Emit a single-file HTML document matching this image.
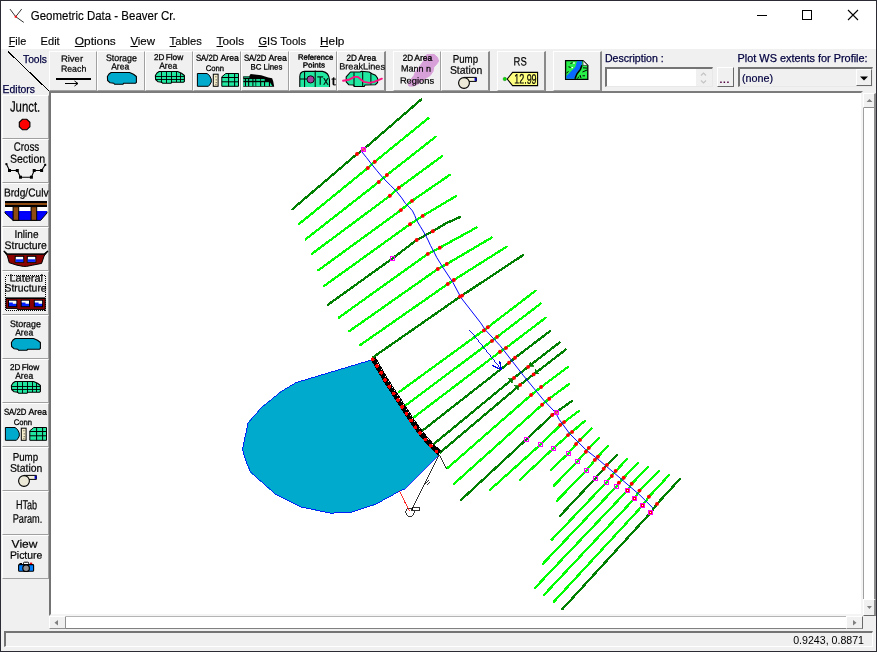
<!DOCTYPE html>
<html><head><meta charset="utf-8"><title>Geometric Data - Beaver Cr.</title>
<style>
html,body{margin:0;padding:0}
body{width:877px;height:652px;overflow:hidden;background:#f0f0f0;font-family:"Liberation Sans", sans-serif;position:relative}
svg text{font-family:"Liberation Sans", sans-serif}
.abs,.btn,.sb{position:absolute;box-sizing:border-box}
.btn{background:#f0f0f0;border-top:1px solid #fff;border-left:1px solid #fff;border-right:1px solid #a0a0a0;border-bottom:1px solid #a0a0a0}
.btn.end{border-right:2px solid #8a8a8a}
.btn svg{position:absolute;left:-1px;top:-1px;overflow:hidden;will-change:transform;text-rendering:geometricPrecision}
#frame{left:0;top:0;width:877px;height:652px;border:1px solid #2b2b33;pointer-events:none}
#title{left:1px;top:1px;width:875px;height:48px;background:#fff}
#canvas{left:49px;top:91px;width:814px;height:525px;background:#fff;border-top:2px solid #7c7c7c;border-left:2px solid #747474;border-right:2px solid #f4f4f4;border-bottom:2px solid #f4f4f4}
#vs{left:863px;top:93px;width:13px;height:523px;background:#fff;border-left:1px solid #a0a0a0;border-right:2px solid #8c8c8c}
#hs{left:49px;top:616px;width:814px;height:13px;background:#fff;border-top:1px solid #b4b4b4;border-bottom:1px solid #808080}
.sb{background:#f0f0f0;border-top:1px solid #fff;border-left:1px solid #fff;border-right:1px solid #909090;border-bottom:1px solid #909090}
#status{left:4px;top:631px;width:869px;height:16px;border-top:2px solid #747474;border-left:2px solid #747474;border-right:1px solid #fff;border-bottom:1px solid #fff;background:#f0f0f0}
#desc{left:605px;top:67px;width:108px;height:20px;background:#fff;border-top:2px solid #747474;border-left:2px solid #747474;border-right:1px solid #e8e8e8;border-bottom:1px solid #e8e8e8}
#combo{left:738px;top:67px;width:135px;height:20px;background:#f0f0f0;border-top:2px solid #747474;border-left:2px solid #747474;border-right:1px solid #e8e8e8;border-bottom:1px solid #e8e8e8}
#ov{position:absolute;left:0;top:0;pointer-events:none}
</style></head><body>
<div class="abs" id="title"></div>
<div class="abs" id="canvas"></div>
<div class="abs" id="vs"></div>
<div class="abs" id="hs"></div>
<div class="sb" style="left:863px;top:93px;width:13px;height:15px;border-right:2px solid #8c8c8c"></div>
<div class="sb" style="left:863px;top:599px;width:13px;height:17px;border-right:2px solid #8c8c8c;border-bottom:1px solid #696969"></div>
<div class="sb" style="left:49px;top:616px;width:17px;height:13px"></div>
<div class="sb" style="left:846px;top:616px;width:17px;height:13px;border-right:1px solid #696969"></div>
<div class="abs" id="status"></div>
<div class="abs" id="desc"></div>
<div class="abs" id="combo"></div>
<div class="sb" style="left:717px;top:67px;width:17px;height:20px;border-right:1px solid #696969;border-bottom:1px solid #696969"></div>
<div class="sb" style="left:856px;top:69px;width:16px;height:17px;border-right:1px solid #696969;border-bottom:1px solid #696969"></div>
<div class="btn" style="left:49px;top:51px;width:48px;height:40px"><svg width="48" height="40" viewBox="49 51 48 40"><text x="60.9" y="61.8" font-size="9.06" fill="#000" textLength="22.2" lengthAdjust="spacingAndGlyphs" stroke="#000" stroke-width="0.22" transform="rotate(0.2 60.9 61.8)">River</text><text x="60.9" y="71.8" font-size="9.06" fill="#000" textLength="25.4" lengthAdjust="spacingAndGlyphs" stroke="#000" stroke-width="0.22" transform="rotate(0.2 60.9 71.8)">Reach</text><path d="M56 79 H91" stroke="#000" stroke-width="2" shape-rendering="crispEdges"/><path d="M65 83.5 H78 M74.5 81 L78 83.5 L74.5 86" stroke="#000" stroke-width="1" fill="none"/></svg></div>
<div class="btn" style="left:97px;top:51px;width:48px;height:40px"><svg width="48" height="40" viewBox="97 51 48 40"><g transform="translate(96 -266)"><text x="9.9" y="327.1" font-size="9.48" fill="#000" textLength="31.0" lengthAdjust="spacingAndGlyphs" stroke="#000" stroke-width="0.25" transform="rotate(0.2 9.9 327.1)">Storage</text><text x="15.2" y="335.5" font-size="9.06" fill="#000" textLength="18.0" lengthAdjust="spacingAndGlyphs" stroke="#000" stroke-width="0.25" transform="rotate(0.2 15.2 335.5)">Area</text><path d="M15.2 338.5 H33.6 L37.5 340.2 L40.4 342.5 V348.4 L39.6 349.2 H27.6 L27 350.3 H18.6 L17.8 349.2 L14.2 348.8 L11.6 346.5 L11.4 342.5 L13 340 Z" fill="#00aacc" stroke="#000" stroke-width="1.1" stroke-linejoin="round"/></g></svg></div>
<div class="btn" style="left:145px;top:51px;width:48px;height:40px"><svg width="48" height="40" viewBox="145 51 48 40"><g transform="translate(144 -310)"><text x="9.9" y="370.0" font-size="8.45" fill="#000" textLength="10.4" lengthAdjust="spacingAndGlyphs" stroke="#000" stroke-width="0.3" transform="rotate(0.2 9.9 370.0)">2D</text><text x="21.7" y="370.0" font-size="8.45" fill="#000" textLength="17.5" lengthAdjust="spacingAndGlyphs" stroke="#000" stroke-width="0.3" transform="rotate(0.2 21.7 370.0)">Flow</text><text x="15.2" y="378.8" font-size="9.06" fill="#000" textLength="18.0" lengthAdjust="spacingAndGlyphs" stroke="#000" stroke-width="0.25" transform="rotate(0.2 15.2 378.8)">Area</text><g transform="translate(0 43)"><path d="M15.2 338.5 H33.6 L37.5 340.2 L40.4 342.5 V348.4 L39.6 349.2 H27.6 L27 350.3 H18.6 L17.8 349.2 L14.2 348.8 L11.6 346.5 L11.4 342.5 L13 340 Z" fill="#20e8a0" stroke="#000" stroke-width="1.1" stroke-linejoin="round"/><path d="M11.5 343 H40.4 M11.5 346.4 H40.4 M17.3 339 V349.5 M22.6 338.5 V350 M27.5 338.5 V350 M32.3 338.5 V349 M36.7 340 V349" stroke="#000" stroke-width="0.9" fill="none" shape-rendering="crispEdges"/></g></g></svg></div>
<div class="btn" style="left:193px;top:51px;width:48px;height:40px"><svg width="48" height="40" viewBox="193 51 48 40"><g transform="translate(192 -354)"><text x="3.9" y="414.7" font-size="8.65" fill="#000" textLength="22.5" lengthAdjust="spacingAndGlyphs" stroke="#000" stroke-width="0.3" transform="rotate(0.2 3.9 414.7)">SA/2D</text><text x="28.6" y="414.7" font-size="8.65" fill="#000" textLength="18.3" lengthAdjust="spacingAndGlyphs" stroke="#000" stroke-width="0.3" transform="rotate(0.2 28.6 414.7)">Area</text><text x="13.8" y="424.9" font-size="8.14" fill="#000" textLength="18.3" lengthAdjust="spacingAndGlyphs" stroke="#000" stroke-width="0.3" transform="rotate(0.2 13.8 424.9)">Conn</text><path d="M5.4 427.5 H15 L17.5 429.5 L19.2 433 L19.3 436 L17.6 439 L16.4 440.3 H5.4 Z" fill="#00aacc" stroke="#000" stroke-width="1"/><rect x="21.3" y="428.2" width="4.8" height="12.1" fill="#f6eecb" stroke="#000" stroke-width="1"/><path d="M23.9 430.3 v1 M24.2 433.4 v1 M24.2 436.2 v1 M23.9 438.3 v0.8" stroke="#333" stroke-width="1"/><path d="M33.8 427.5 H46.5 V440.3 H29.8 V430.8 Z" fill="#20e8a0" stroke="#000" stroke-width="1"/><path d="M29.8 431.5 H46.5 M29.8 435.8 H46.5 M36.6 427.5 V440.3 M42.6 427.5 V440.3" stroke="#000" stroke-width="1" fill="none"/></g></svg></div>
<div class="btn" style="left:241px;top:51px;width:48px;height:40px"><svg width="48" height="40" viewBox="241 51 48 40"><text x="243.9" y="60.7" font-size="8.65" fill="#000" textLength="22.5" lengthAdjust="spacingAndGlyphs" stroke="#000" stroke-width="0.3" transform="rotate(0.2 243.9 60.7)">SA/2D</text><text x="268.6" y="60.7" font-size="8.65" fill="#000" textLength="18.3" lengthAdjust="spacingAndGlyphs" stroke="#000" stroke-width="0.3" transform="rotate(0.2 268.6 60.7)">Area</text><text x="250.6" y="69.5" font-size="7.83" fill="#000" textLength="31.7" lengthAdjust="spacingAndGlyphs" stroke="#000" stroke-width="0.3" transform="rotate(0.2 250.6 69.5)">BC Lines</text><path d="M243.2 76.2 H249.2 L250.6 74.1 L261.2 75.2 L268.2 77.6 L272.1 78.3 L273.2 81.2 L274.2 86.8 H243.2Z" fill="#000"/><g fill="#20e8a0"><rect x="243.9" y="76.7" width="5.5" height="0.9"/><rect x="243.2" y="79.1" width="1.7" height="1.7"/><rect x="246" y="79.1" width="2.1" height="1.7"/><rect x="249.2" y="79.1" width="3.2" height="1.7"/><rect x="253.4" y="79.1" width="1.8" height="1.7"/><rect x="256.2" y="79.1" width="3.9" height="1.7"/><rect x="260.8" y="79.1" width="3.9" height="1.7"/><rect x="243.2" y="82.2" width="1.7" height="3.9"/><rect x="246" y="82.2" width="2.1" height="3.9"/><rect x="249.2" y="82.2" width="3.2" height="3.9"/><rect x="253.4" y="82.2" width="2.1" height="3.9"/><rect x="256.2" y="82.2" width="3.9" height="3.9"/><rect x="261.2" y="82.2" width="2.8" height="3.9"/><rect x="265.1" y="82.2" width="3.8" height="3.9"/><path d="M270 82.5 L272.3 86.1 H270Z"/></g></svg></div>
<div class="btn" style="left:289px;top:51px;width:48px;height:40px"><svg width="48" height="40" viewBox="289 51 48 40"><text x="297.9" y="59.6" font-size="7.42" fill="#000" textLength="35.3" lengthAdjust="spacingAndGlyphs" stroke="#000" stroke-width="0.35" transform="rotate(0.2 297.9 59.6)">Reference</text><text x="302.8" y="67.4" font-size="7.42" fill="#000" textLength="22.2" lengthAdjust="spacingAndGlyphs" stroke="#000" stroke-width="0.35" transform="rotate(0.2 302.8 67.4)">Points</text><path d="M299.8 87 V76.5 Q300 71.5 304.5 71.4 H322.5 Q329 72.5 329.5 80 V87" fill="#20e8a0" stroke="#000" stroke-width="1.1"/><path d="M304.6 71.5 V87 M315.2 70.5 V87 M300 79 H307" stroke="#000" stroke-width="1" fill="none"/><circle cx="310.6" cy="79.4" r="3.6" fill="#a040a0" stroke="#000" stroke-width="0.9"/><text x="317.3" y="84.7" font-size="12.15" fill="#000" textLength="6.0" lengthAdjust="spacingAndGlyphs" stroke="#000" stroke-width="0.22" transform="rotate(0.2 317.3 84.7)">T</text><text x="323.3" y="84.7" font-size="12.15" fill="#000" textLength="5.3" lengthAdjust="spacingAndGlyphs" stroke="#000" stroke-width="0.22" transform="rotate(0.2 323.3 84.7)">x</text><text x="331.4" y="85.2" font-size="12.15" fill="#000" textLength="4.4" lengthAdjust="spacingAndGlyphs" stroke="#000" stroke-width="0.22" transform="rotate(0.2 331.4 85.2)">t</text></svg></div>
<div class="btn end" style="left:337px;top:51px;width:49px;height:40px"><svg width="49" height="40" viewBox="337 51 49 40"><text x="346.6" y="60.7" font-size="8.65" fill="#000" textLength="10.4" lengthAdjust="spacingAndGlyphs" stroke="#000" stroke-width="0.3" transform="rotate(0.2 346.6 60.7)">2D</text><text x="358.2" y="60.7" font-size="8.65" fill="#000" textLength="18.0" lengthAdjust="spacingAndGlyphs" stroke="#000" stroke-width="0.3" transform="rotate(0.2 358.2 60.7)">Area</text><text x="339.2" y="69.5" font-size="9.06" fill="#000" textLength="45.8" lengthAdjust="spacingAndGlyphs" stroke="#000" stroke-width="0.22" transform="rotate(0.2 339.2 69.5)">BreakLines</text><path d="M350.5 72 H360 L361.4 71.3 L369.2 72 L372 73.8 L375.5 75.2 L377.6 78.3 V82.6 L375.5 84.7 L365 85 L364.2 86.5 H354.3 L353.6 85 L348.7 84.7 L346.2 81.9 V76.9 Z" fill="#20e8a0" stroke="#000" stroke-width="1.1" stroke-linejoin="round"/><path d="M354 72.5 V86.5 M362.7 71.3 V86.5 M370.9 73.4 V84.7" stroke="#000" stroke-width="1" fill="none"/><path d="M343.1 80.8 L348.7 79.8 L354.3 76.9 L357.9 76.9 L360.7 79.4 L364.2 81.9 L369.2 82.9 L374.1 81.9 L378.3 80.1 L381.9 78.7" stroke="#ff1080" stroke-width="1.9" fill="none" stroke-linecap="round" stroke-linejoin="round"/></svg></div>
<div class="btn" style="left:393px;top:51px;width:48px;height:40px"><svg width="48" height="40" viewBox="393 51 48 40"><polygon points="426.7,54.7 434.1,54.4 437.3,57.2 438.7,61.1 436.6,64.2 433.8,67.1 433.0,71.3 430.2,75.5 423.2,79.8 418.2,84.0 413.3,86.1 409.1,86.1 408.0,84.0 411.2,79.1 414.0,75.5 415.4,72.0 420.3,65.6 423.2,61.4 424.6,57.2" fill="#d8a0d8" stroke="#d8a0d8" stroke-width="1" stroke-linejoin="round"/><text x="402.7" y="60.7" font-size="8.65" fill="#000" textLength="10.4" lengthAdjust="spacingAndGlyphs" stroke="#000" stroke-width="0.3" transform="rotate(0.2 402.7 60.7)">2D</text><text x="414.3" y="60.7" font-size="8.65" fill="#000" textLength="18.0" lengthAdjust="spacingAndGlyphs" stroke="#000" stroke-width="0.3" transform="rotate(0.2 414.3 60.7)">Area</text><text x="400.9" y="71.6" font-size="9.06" fill="#000" textLength="30.0" lengthAdjust="spacingAndGlyphs" stroke="#000" stroke-width="0.22" transform="rotate(0.2 400.9 71.6)">Mann n</text><text x="399.9" y="83.6" font-size="8.86" fill="#000" textLength="34.2" lengthAdjust="spacingAndGlyphs" stroke="#000" stroke-width="0.22" transform="rotate(0.2 399.9 83.6)">Regions</text></svg></div>
<div class="btn end" style="left:441px;top:51px;width:49px;height:40px"><svg width="49" height="40" viewBox="441 51 49 40"><g transform="translate(440 -398)"><text x="12.7" y="460.8" font-size="11.12" fill="#000" textLength="25.4" lengthAdjust="spacingAndGlyphs" stroke="#000" stroke-width="0.22" transform="rotate(0.2 12.7 460.8)">Pump</text><text x="9.9" y="471.8" font-size="11.12" fill="#000" textLength="32.4" lengthAdjust="spacingAndGlyphs" stroke="#000" stroke-width="0.22" transform="rotate(0.2 9.9 471.8)">Station</text><path d="M24 475.4 H36.4 V479.4 H29" fill="#f4f0dc" stroke="#000" stroke-width="1"/><rect x="34.6" y="475.9" width="1.8" height="3" fill="#0000d0"/><circle cx="24" cy="481" r="5.4" fill="#ece9d8" stroke="#000" stroke-width="1.1"/></g></svg></div>
<div class="btn end" style="left:497px;top:51px;width:49px;height:40px"><svg width="49" height="40" viewBox="497 51 49 40"><text x="513.6" y="65.6" font-size="12.15" fill="#000" textLength="13.1" lengthAdjust="spacingAndGlyphs" stroke="#000" stroke-width="0.22" transform="rotate(0.2 513.6 65.6)">RS</text><path d="M507.2 79 L512.6 72.4 H537.6 V85.6 H512.6Z" fill="#ffff80" stroke="#000" stroke-width="1.1"/><circle cx="504.8" cy="79" r="1.7" fill="#00e000" stroke="#108010" stroke-width="0.5"/><text x="514.2" y="83.6" font-size="13.7" fill="#000" textLength="22.4" lengthAdjust="spacingAndGlyphs" stroke="#000" stroke-width="0.22" transform="rotate(0.2 514.2 83.6)">12.99</text></svg></div>
<div class="btn end" style="left:553px;top:51px;width:49px;height:40px"><svg width="49" height="40" viewBox="553 51 49 40"><path d="M565.6 60.6 H583 L587.8 65.4 V79.3 H565.6Z" fill="#28f048" stroke="#000" stroke-width="1.3"/><path d="M583 60.6 V65.4 H587.8Z" fill="#fff" stroke="#000" stroke-width="0.6"/><path d="M566.3 78.7 V76 L571.8 70.6 L575.3 67 L577 61.3 H582 L581.8 64.9 L580 69 L576.5 73.2 L574.4 78.7Z" fill="#0868ff"/><path d="M575 78.7 L577 73.8 L580.4 69.4 L582 65.3" stroke="#000" stroke-width="1.6" fill="none"/><path d="M570.5 63.5 l2 -0.8 M568.5 66.8 l2.2 0.6 M566.5 73 l2 -1.5 M580 75 l1 3 M582.5 75.8 h2.5 M583 67.8 l4 0.3 M582.5 72 l4.5 -2 M579 76.5 l-1.5 2" stroke="#000" stroke-width="1" fill="none"/><rect x="573.2" y="62.3" width="1.5" height="1.5" fill="#fff"/><rect x="571.5" y="67" width="1.5" height="1.2" fill="#fff"/></svg></div>
<div class="btn" style="left:2px;top:95px;width:47px;height:44px"><svg width="47" height="44" viewBox="2 95 47 44"><text x="9.9" y="111.6" font-size="14.94" fill="#000" textLength="30.3" lengthAdjust="spacingAndGlyphs" stroke="#000" stroke-width="0.22" transform="rotate(0.2 9.9 111.6)">Junct.</text><path d="M22.4 119.3 H26.8 L29.9 122.3 V126.7 L26.8 129.8 H22.4 L19.3 126.7 V122.3Z" fill="#ff0000" stroke="#000" stroke-width="1.1"/></svg></div>
<div class="btn" style="left:2px;top:139px;width:47px;height:44px"><svg width="47" height="44" viewBox="2 139 47 44"><text x="13.8" y="150.7" font-size="12.15" fill="#000" textLength="25.4" lengthAdjust="spacingAndGlyphs" stroke="#000" stroke-width="0.22" transform="rotate(0.2 13.8 150.7)">Cross</text><text x="9.9" y="162.7" font-size="11.74" fill="#000" textLength="35.3" lengthAdjust="spacingAndGlyphs" stroke="#000" stroke-width="0.22" transform="rotate(0.2 9.9 162.7)">Section</text><polyline points="6.4,164.1 9.5,170.5 17.3,170.5 20.5,177.2 31.4,177.2 34.2,170.5 41.6,170.5 45.2,164.8" fill="none" stroke="#000" stroke-width="1.1"/><rect x="5.4" y="163.1" width="2" height="2" fill="#000"/><rect x="8.0" y="169.0" width="3.0" height="3.0" fill="#000"/><rect x="15.8" y="169.0" width="3.0" height="3.0" fill="#000"/><rect x="19.0" y="175.7" width="3.0" height="3.0" fill="#000"/><rect x="29.9" y="175.7" width="3.0" height="3.0" fill="#000"/><rect x="32.7" y="169.0" width="3.0" height="3.0" fill="#000"/><rect x="40.1" y="169.0" width="3.0" height="3.0" fill="#000"/><rect x="44.2" y="163.8" width="2" height="2" fill="#000"/></svg></div>
<div class="btn" style="left:2px;top:183px;width:47px;height:44px"><svg width="47" height="44" viewBox="2 183 47 44"><text x="3.9" y="196.5" font-size="11.64" fill="#000" textLength="44.6" lengthAdjust="spacingAndGlyphs" stroke="#000" stroke-width="0.22" transform="rotate(0.2 3.9 196.5)">Brdg/Culv</text><g shape-rendering="crispEdges"><rect x="5" y="201" width="42" height="6" fill="#000"/><rect x="5" y="202.5" width="42" height="2.5" fill="#8e4c12"/><rect x="5" y="207" width="42" height="5" fill="#fff"/></g><path d="M5 211.6 H47 V213 L40.6 220.4 H13.1 L5 213Z" fill="#0000ff" stroke="#000" stroke-width="1" stroke-linejoin="round"/><path d="M5 211.6 H47" stroke="#0000ff" stroke-width="1.2"/><rect x="13.1" y="206.7" width="5.6" height="13.6" fill="#8e4c12" stroke="#000" stroke-width="1"/><rect x="31.1" y="206.7" width="5.6" height="13.6" fill="#8e4c12" stroke="#000" stroke-width="1"/></svg></div>
<div class="btn" style="left:2px;top:227px;width:47px;height:44px"><svg width="47" height="44" viewBox="2 227 47 44"><text x="14.5" y="238.0" font-size="11.12" fill="#000" textLength="24.0" lengthAdjust="spacingAndGlyphs" stroke="#000" stroke-width="0.22" transform="rotate(0.2 14.5 238.0)">Inline</text><text x="4.6" y="248.9" font-size="11.12" fill="#000" textLength="42.3" lengthAdjust="spacingAndGlyphs" stroke="#000" stroke-width="0.22" transform="rotate(0.2 4.6 248.9)">Structure</text><path d="M3.9 251 L7.4 254.2 H44.1 L48 251 L44.1 256 L41.6 263.4 L32.5 265.2 L26.5 266.4 H23.3 L16.9 265.2 L9.2 262.7 L7.4 256 Z" fill="#8b0000" stroke="#000" stroke-width="1" stroke-linejoin="round"/><path d="M3.9 251 L7.4 254.2 H44.1 L48 251" fill="none" stroke="#000" stroke-width="1.3"/><rect x="15.2" y="256.3" width="8.5" height="6" fill="#fff" stroke="#000" stroke-width="1"/><rect x="15.7" y="259.3" width="7.5" height="2.6" fill="#0020ff"/><rect x="27.3" y="256.3" width="8.5" height="6" fill="#fff" stroke="#000" stroke-width="1"/><rect x="27.8" y="259.3" width="7.5" height="2.6" fill="#0020ff"/></svg></div>
<div class="btn" style="left:2px;top:271px;width:47px;height:44px"><svg width="47" height="44" viewBox="2 271 47 44"><text x="9.5" y="281.6" font-size="10.51" fill="#000" textLength="33.5" lengthAdjust="spacingAndGlyphs" stroke="#000" stroke-width="0.22" transform="rotate(0.2 9.5 281.6)">Lateral</text><text x="4.6" y="291.5" font-size="10.71" fill="#000" textLength="42.0" lengthAdjust="spacingAndGlyphs" stroke="#000" stroke-width="0.22" transform="rotate(0.2 4.6 291.5)">Structure</text><path d="M6 298.3 H45.2 V309.4 H17.3 V308.4 H6Z" fill="#8b0000" stroke="#000" stroke-width="1"/><path d="M6 298.3 H45.2" stroke="#000" stroke-width="1.6"/><rect x="8.5" y="300.3" width="8.3" height="6.4" fill="#0020ff" stroke="#000" stroke-width="1"/><path d="M9.0 300.8 h7.3 v3 h-3.5 v-1.2 h-3.8Z" fill="#fffff0"/><rect x="21.2" y="300.3" width="8.3" height="6.4" fill="#0020ff" stroke="#000" stroke-width="1"/><path d="M21.7 300.8 h7.3 v3 h-3.5 v-1.2 h-3.8Z" fill="#fffff0"/><rect x="34.3" y="300.3" width="8.3" height="6.4" fill="#0020ff" stroke="#000" stroke-width="1"/><path d="M34.8 300.8 h7.3 v3 h-3.5 v-1.2 h-3.8Z" fill="#fffff0"/><rect x="5.5" y="275.5" width="40" height="35" fill="none" stroke="#000" stroke-width="1" stroke-dasharray="1 1" shape-rendering="crispEdges"/></svg></div>
<div class="btn" style="left:2px;top:315px;width:47px;height:44px"><svg width="47" height="44" viewBox="2 315 47 44"><text x="9.9" y="327.1" font-size="9.48" fill="#000" textLength="31.0" lengthAdjust="spacingAndGlyphs" stroke="#000" stroke-width="0.25" transform="rotate(0.2 9.9 327.1)">Storage</text><text x="15.2" y="335.5" font-size="9.06" fill="#000" textLength="18.0" lengthAdjust="spacingAndGlyphs" stroke="#000" stroke-width="0.25" transform="rotate(0.2 15.2 335.5)">Area</text><path d="M15.2 338.5 H33.6 L37.5 340.2 L40.4 342.5 V348.4 L39.6 349.2 H27.6 L27 350.3 H18.6 L17.8 349.2 L14.2 348.8 L11.6 346.5 L11.4 342.5 L13 340 Z" fill="#00aacc" stroke="#000" stroke-width="1.1" stroke-linejoin="round"/></svg></div>
<div class="btn" style="left:2px;top:359px;width:47px;height:44px"><svg width="47" height="44" viewBox="2 359 47 44"><text x="9.9" y="370.0" font-size="8.45" fill="#000" textLength="10.4" lengthAdjust="spacingAndGlyphs" stroke="#000" stroke-width="0.3" transform="rotate(0.2 9.9 370.0)">2D</text><text x="21.7" y="370.0" font-size="8.45" fill="#000" textLength="17.5" lengthAdjust="spacingAndGlyphs" stroke="#000" stroke-width="0.3" transform="rotate(0.2 21.7 370.0)">Flow</text><text x="15.2" y="378.8" font-size="9.06" fill="#000" textLength="18.0" lengthAdjust="spacingAndGlyphs" stroke="#000" stroke-width="0.25" transform="rotate(0.2 15.2 378.8)">Area</text><g transform="translate(0 43)"><path d="M15.2 338.5 H33.6 L37.5 340.2 L40.4 342.5 V348.4 L39.6 349.2 H27.6 L27 350.3 H18.6 L17.8 349.2 L14.2 348.8 L11.6 346.5 L11.4 342.5 L13 340 Z" fill="#20e8a0" stroke="#000" stroke-width="1.1" stroke-linejoin="round"/><path d="M11.5 343 H40.4 M11.5 346.4 H40.4 M17.3 339 V349.5 M22.6 338.5 V350 M27.5 338.5 V350 M32.3 338.5 V349 M36.7 340 V349" stroke="#000" stroke-width="0.9" fill="none" shape-rendering="crispEdges"/></g></svg></div>
<div class="btn" style="left:2px;top:403px;width:47px;height:44px"><svg width="47" height="44" viewBox="2 403 47 44"><text x="3.9" y="414.7" font-size="8.65" fill="#000" textLength="22.5" lengthAdjust="spacingAndGlyphs" stroke="#000" stroke-width="0.3" transform="rotate(0.2 3.9 414.7)">SA/2D</text><text x="28.6" y="414.7" font-size="8.65" fill="#000" textLength="18.3" lengthAdjust="spacingAndGlyphs" stroke="#000" stroke-width="0.3" transform="rotate(0.2 28.6 414.7)">Area</text><text x="13.8" y="424.9" font-size="8.14" fill="#000" textLength="18.3" lengthAdjust="spacingAndGlyphs" stroke="#000" stroke-width="0.3" transform="rotate(0.2 13.8 424.9)">Conn</text><path d="M5.4 427.5 H15 L17.5 429.5 L19.2 433 L19.3 436 L17.6 439 L16.4 440.3 H5.4 Z" fill="#00aacc" stroke="#000" stroke-width="1"/><rect x="21.3" y="428.2" width="4.8" height="12.1" fill="#f6eecb" stroke="#000" stroke-width="1"/><path d="M23.9 430.3 v1 M24.2 433.4 v1 M24.2 436.2 v1 M23.9 438.3 v0.8" stroke="#333" stroke-width="1"/><path d="M33.8 427.5 H46.5 V440.3 H29.8 V430.8 Z" fill="#20e8a0" stroke="#000" stroke-width="1"/><path d="M29.8 431.5 H46.5 M29.8 435.8 H46.5 M36.6 427.5 V440.3 M42.6 427.5 V440.3" stroke="#000" stroke-width="1" fill="none"/></svg></div>
<div class="btn" style="left:2px;top:447px;width:47px;height:44px"><svg width="47" height="44" viewBox="2 447 47 44"><text x="12.7" y="460.8" font-size="11.12" fill="#000" textLength="25.4" lengthAdjust="spacingAndGlyphs" stroke="#000" stroke-width="0.22" transform="rotate(0.2 12.7 460.8)">Pump</text><text x="9.9" y="471.8" font-size="11.12" fill="#000" textLength="32.4" lengthAdjust="spacingAndGlyphs" stroke="#000" stroke-width="0.22" transform="rotate(0.2 9.9 471.8)">Station</text><path d="M24 475.4 H36.4 V479.4 H29" fill="#f4f0dc" stroke="#000" stroke-width="1"/><rect x="34.6" y="475.9" width="1.8" height="3" fill="#0000d0"/><circle cx="24" cy="481" r="5.4" fill="#ece9d8" stroke="#000" stroke-width="1.1"/></svg></div>
<div class="btn" style="left:2px;top:491px;width:47px;height:44px"><svg width="47" height="44" viewBox="2 491 47 44"><text x="15.9" y="509.1" font-size="12.67" fill="#000" textLength="21.1" lengthAdjust="spacingAndGlyphs" stroke="#000" stroke-width="0.22" transform="rotate(0.2 15.9 509.1)">HTab</text><text x="12.7" y="522.8" font-size="12.26" fill="#000" textLength="29.6" lengthAdjust="spacingAndGlyphs" stroke="#000" stroke-width="0.22" transform="rotate(0.2 12.7 522.8)">Param.</text></svg></div>
<div class="btn" style="left:2px;top:535px;width:47px;height:44px"><svg width="47" height="44" viewBox="2 535 47 44"><text x="11.6" y="547.8" font-size="11.12" fill="#000" textLength="25.8" lengthAdjust="spacingAndGlyphs" stroke="#000" stroke-width="0.22" transform="rotate(0.2 11.6 547.8)">View</text><text x="9.9" y="558.7" font-size="10.71" fill="#000" textLength="32.4" lengthAdjust="spacingAndGlyphs" stroke="#000" stroke-width="0.22" transform="rotate(0.2 9.9 558.7)">Picture</text><rect x="23.5" y="562.2" width="5.2" height="3" rx="1" fill="#fff" stroke="#000" stroke-width="1"/><rect x="18.6" y="564.6" width="15" height="6.7" rx="0.8" fill="#0080ff" stroke="#000" stroke-width="1.1"/><rect x="19.5" y="563" width="2.5" height="1.5" fill="#000"/><rect x="30" y="562.6" width="2.2" height="1.5" fill="#f00000"/><circle cx="26.1" cy="568.2" r="3.3" fill="#909090" stroke="#000" stroke-width="1.2"/></svg></div>
<svg id="ov" width="877" height="652" viewBox="0 0 877 652">
<g shape-rendering="crispEdges">
<polygon points="371.2,360.0 347.9,367.1 325.3,373.8 296.0,382.6 281.4,391.4 261.9,407.2 248.1,422.8 242.5,449.1 245.6,460.4 250.6,472.2 275.7,494.3 300.2,506.8 330.4,513.1 350.4,512.6 375.3,504.4 403.5,489.0 437.8,455.3 431.0,446.0 420.0,433.0 411.0,420.4 398.0,400.2 385.0,380.0" fill="#00aacc" stroke="#00aacc" stroke-width="1"/>
<polygon points="371.2,360.0 347.9,367.1 325.3,373.8 296.0,382.6 281.4,391.4 261.9,407.2 248.1,422.8 242.5,449.1 245.6,460.4 250.6,472.2 275.7,494.3 300.2,506.8 330.4,513.1 350.4,512.6 375.3,504.4 403.5,489.0 437.8,455.3 431.0,446.0 420.0,433.0 411.0,420.4 398.0,400.2 385.0,380.0" fill="none" stroke="#0000ff" stroke-width="0.8"/>
<g stroke="#00ff00" stroke-width="2.3" fill="none" stroke-linecap="round" stroke-linejoin="round">
<polyline points="298.8,224.2 367.8,168.0 374.8,161.7 428.5,118.1"/>
<polyline points="305.6,239.3 378.8,182.0 386.9,175.0 435.5,136.9"/>
<polyline points="311.9,253.8 389.9,195.8 398.9,187.8 442.3,156.0"/>
<polyline points="318.4,270.2 400.9,210.1 412.0,200.9 449.6,175.0"/>
<polyline points="323.9,286.1 410.0,224.2 422.7,215.9 456.4,195.9"/>
<polyline points="338.7,317.7 427.8,253.9 439.8,247.7 476.4,227.6"/>
<polyline points="349.5,331.0 437.8,269.0 446.8,264.0 491.5,237.7"/>
<polyline points="360.3,345.0 447.8,284.0 453.9,280.0 506.6,246.7"/>
<polyline points="398.9,392.2 485.9,328.8 535.4,290.8"/>
<polyline points="406.4,404.8 494.5,338.9 540.7,303.6"/>
<polyline points="413.9,417.3 500.0,351.8 506.0,347.9 545.7,317.7"/>
<polyline points="447.2,468.3 531.1,395.0 541.1,387.0 567.7,367.1"/>
<polyline points="453.9,483.9 542.1,404.8 549.2,398.7 569.3,383.8"/>
<polyline points="489.9,490.0 540.5,444.5 562.2,423.5 579.2,410.8"/>
<polyline points="519.8,479.9 553.4,448.4 570.0,433.5 585.2,420.7"/>
<polyline points="550.9,469.8 568.5,453.3 578.0,441.9 591.5,428.7"/>
<polyline points="553.6,486.0 577.5,461.4 587.3,449.9 599.2,438.0"/>
<polyline points="556.7,501.0 586.5,470.3 596.3,458.4 608.2,445.7"/>
<polyline points="551.6,539.9 606.4,482.4 613.7,473.4 627.1,458.9"/>
<polyline points="542.8,563.9 616.4,486.5 621.3,480.3 638.0,462.9"/>
<polyline points="534.7,588.2 627.5,490.4 631.7,483.8 648.2,466.9"/>
<polyline points="544.1,594.8 634.6,498.4 639.5,490.6 659.1,470.9"/>
<polyline points="553.7,601.9 642.7,505.4 648.9,496.8 669.3,474.8"/>
</g>
<g stroke="#008000" stroke-width="2.3" fill="none" stroke-linecap="round" stroke-linejoin="round">
<polyline points="292.5,209.1 357.0,154.0 363.5,149.4 421.2,99.5"/>
<polyline points="327.7,304.9 392.4,258.5 416.7,240.0 432.8,231.2 446.0,223.3 460.1,217.0"/>
<polyline points="373.0,357.3 461.0,296.1 523.4,254.9"/>
<polyline points="422.7,430.4 509.0,362.8 515.0,357.8 550.2,331.0"/>
<polyline points="434.5,443.4 514.0,377.9 528.1,366.9 559.4,342.6"/>
<polyline points="440.3,452.4 520.1,384.9 533.6,374.4 565.6,349.7"/>
<polyline points="460.8,500.2 526.4,439.4 552.2,415.0 572.0,401.0"/>
<polyline points="559.7,516.2 595.3,478.4 605.3,466.9 617.0,454.8"/>
<polyline points="562.5,609.0 650.8,512.5 657.0,503.9 680.2,478.7"/>
</g>
<path d="M469.6 330 L501.2 369.4" fill="none" stroke="#0000e8" stroke-width="0.9"/><path d="M492.4 365.6 L501.2 369.4 L499.6 360.6" fill="none" stroke="#0000e8" stroke-width="1.3"/>
<polyline points="372.5,358.5 385.0,380.0 398.0,400.2 411.0,420.4 420.0,433.0 431.0,446.0 439.5,453.5" fill="none" stroke="#000" stroke-width="4.2"/>
<polyline points="374.9,357.0 387.4,378.5 400.4,398.7 413.4,418.9 422.4,431.5 433.4,444.5 441.9,452.0" fill="none" stroke="#000" stroke-width="1"/>
<circle cx="372.7" cy="359.3" r="1.9" fill="#ff0000"/>
<circle cx="376.9" cy="366" r="1.9" fill="#ff0000"/>
<circle cx="381.1" cy="372.8" r="1.9" fill="#ff0000"/>
<circle cx="385" cy="380.1" r="1.9" fill="#ff0000"/>
<circle cx="389.2" cy="386.8" r="1.9" fill="#ff0000"/>
<circle cx="393.8" cy="393.6" r="1.9" fill="#ff0000"/>
<circle cx="398" cy="400.2" r="1.9" fill="#ff0000"/>
<circle cx="402.2" cy="406.9" r="1.9" fill="#ff0000"/>
<circle cx="406.5" cy="413.9" r="1.9" fill="#ff0000"/>
<circle cx="411" cy="420.4" r="1.9" fill="#ff0000"/>
<circle cx="415.2" cy="427.2" r="1.9" fill="#ff0000"/>
<circle cx="420" cy="433.1" r="1.9" fill="#ff0000"/>
<circle cx="425.4" cy="439.5" r="1.9" fill="#ff0000"/>
<circle cx="430.9" cy="445.8" r="1.9" fill="#ff0000"/>
<circle cx="436.4" cy="451.4" r="1.9" fill="#ff0000"/>
<circle cx="410" cy="512.3" r="4.2" fill="#fff" stroke="#000" stroke-width="0.8"/>
<rect x="412.5" y="507.5" width="7" height="3" fill="#fff" stroke="#000" stroke-width="0.8"/>
<path d="M439.8 454.5 L446.8 468.5 M439 455.3 L411.4 510.5 M425.3 483.2 l3.4 -2.8 M426.8 485.2 l3.4 -2.8" fill="none" stroke="#000" stroke-width="0.8"/>
<path d="M399.9 491.4 L409.9 511.3 M403.5 502.5 l2 -1" fill="none" stroke="#ff0000" stroke-width="0.8"/>
<path d="M513.2 378.5 l-1.5 4.6 l-0.9 -2.7 l-2.6 -1.7 z" fill="#008000" stroke="#008000" stroke-width="0.8"/>
<path d="M519.3 385.5 l-1.5 4.6 l-0.9 -2.7 l-2.6 -1.7 z" fill="#008000" stroke="#008000" stroke-width="0.8"/>
<path d="M528.9 366.3 l1.5 -4.6 l0.9 2.7 l2.6 1.7 z" fill="#008000" stroke="#008000" stroke-width="0.8"/>
<path d="M534.4 373.8 l1.5 -4.6 l0.9 2.7 l2.6 1.7 z" fill="#008000" stroke="#008000" stroke-width="0.8"/>
</g>
<polyline points="361.5,151.4 366.6,157.7 370.8,163.2 376.6,170.3 382.9,177.8 390.4,185.3 396.7,191.6 401.7,197.9 405.4,203.4 409.2,207.1 412.5,210.9 414.7,215.4 416.7,220.4 420.5,226.7 425.0,234.2 428.0,240.0 430.5,245.5 433.5,251.0 436.8,257.6 443.1,267.7 453.1,282.8 461.1,297.8 480.7,322.9 485.4,330.0 500.0,345.5 523.1,375.2 543.5,400.0 555.7,412.8 559.1,419.3 569.5,433.5 585.9,449.8 599.2,460.2 614.1,472.9 640.0,495.2 652.9,508.0" fill="none" stroke="#0000ff" stroke-width="1"/>
<circle cx="357" cy="154" r="1.95" fill="#ff0000"/>
<circle cx="367.8" cy="168" r="1.95" fill="#ff0000"/>
<circle cx="374.8" cy="161.7" r="1.95" fill="#ff0000"/>
<circle cx="378.8" cy="182" r="1.95" fill="#ff0000"/>
<circle cx="386.9" cy="175" r="1.95" fill="#ff0000"/>
<circle cx="389.9" cy="195.8" r="1.95" fill="#ff0000"/>
<circle cx="398.9" cy="187.8" r="1.95" fill="#ff0000"/>
<circle cx="400.9" cy="210.1" r="1.95" fill="#ff0000"/>
<circle cx="412" cy="200.9" r="1.95" fill="#ff0000"/>
<circle cx="410" cy="224.2" r="1.95" fill="#ff0000"/>
<circle cx="422.7" cy="215.9" r="1.95" fill="#ff0000"/>
<circle cx="416.7" cy="240" r="1.95" fill="#ff0000"/>
<circle cx="432.8" cy="231.2" r="1.95" fill="#ff0000"/>
<circle cx="427.8" cy="253.9" r="1.95" fill="#ff0000"/>
<circle cx="439.8" cy="247.7" r="1.95" fill="#ff0000"/>
<circle cx="437.8" cy="269" r="1.95" fill="#ff0000"/>
<circle cx="446.8" cy="264" r="1.95" fill="#ff0000"/>
<circle cx="447.8" cy="284" r="1.95" fill="#ff0000"/>
<circle cx="453.9" cy="280" r="1.95" fill="#ff0000"/>
<circle cx="459.9" cy="296.6" r="1.95" fill="#ff0000"/>
<circle cx="462.1" cy="295.6" r="1.95" fill="#ff0000"/>
<circle cx="483.9" cy="330.4" r="1.95" fill="#ff0000"/>
<circle cx="487.8" cy="327.2" r="1.95" fill="#ff0000"/>
<circle cx="492" cy="340.9" r="1.95" fill="#ff0000"/>
<circle cx="497" cy="336.9" r="1.95" fill="#ff0000"/>
<circle cx="500" cy="351.8" r="1.95" fill="#ff0000"/>
<circle cx="506" cy="347.9" r="1.95" fill="#ff0000"/>
<circle cx="509" cy="362.8" r="1.95" fill="#ff0000"/>
<circle cx="515" cy="357.8" r="1.95" fill="#ff0000"/>
<circle cx="514" cy="377.9" r="1.95" fill="#ff0000"/>
<circle cx="528.1" cy="366.9" r="1.95" fill="#ff0000"/>
<circle cx="520.1" cy="384.9" r="1.95" fill="#ff0000"/>
<circle cx="533.6" cy="374.4" r="1.95" fill="#ff0000"/>
<circle cx="531.1" cy="395" r="1.95" fill="#ff0000"/>
<circle cx="541.1" cy="387" r="1.95" fill="#ff0000"/>
<circle cx="542.1" cy="404.8" r="1.95" fill="#ff0000"/>
<circle cx="549.2" cy="398.7" r="1.95" fill="#ff0000"/>
<circle cx="552.2" cy="415" r="1.95" fill="#ff0000"/>
<circle cx="560.2" cy="424.9" r="1.95" fill="#ff0000"/>
<circle cx="564.1" cy="422.1" r="1.95" fill="#ff0000"/>
<circle cx="568" cy="435.1" r="1.95" fill="#ff0000"/>
<circle cx="572.1" cy="431.9" r="1.95" fill="#ff0000"/>
<circle cx="576.1" cy="444" r="1.95" fill="#ff0000"/>
<circle cx="580" cy="439.9" r="1.95" fill="#ff0000"/>
<circle cx="585.9" cy="451.8" r="1.95" fill="#ff0000"/>
<circle cx="588.8" cy="447.9" r="1.95" fill="#ff0000"/>
<circle cx="594.8" cy="459.9" r="1.95" fill="#ff0000"/>
<circle cx="597.9" cy="456.8" r="1.95" fill="#ff0000"/>
<circle cx="603.7" cy="468.8" r="1.95" fill="#ff0000"/>
<circle cx="606.9" cy="464.9" r="1.95" fill="#ff0000"/>
<circle cx="611.8" cy="476" r="1.95" fill="#ff0000"/>
<circle cx="615.6" cy="470.9" r="1.95" fill="#ff0000"/>
<circle cx="618.9" cy="482.8" r="1.95" fill="#ff0000"/>
<circle cx="623.7" cy="477.8" r="1.95" fill="#ff0000"/>
<circle cx="627.5" cy="490.4" r="1.95" fill="#ff0000"/>
<circle cx="631.7" cy="483.8" r="1.95" fill="#ff0000"/>
<circle cx="634.6" cy="498.4" r="1.95" fill="#ff0000"/>
<circle cx="639.5" cy="490.6" r="1.95" fill="#ff0000"/>
<circle cx="642.7" cy="505.4" r="1.95" fill="#ff0000"/>
<circle cx="648.9" cy="496.8" r="1.95" fill="#ff0000"/>
<circle cx="650.8" cy="512.5" r="1.95" fill="#ff0000"/>
<circle cx="657" cy="503.9" r="1.95" fill="#ff0000"/>
<circle cx="363.5" cy="149.4" r="1.6" fill="#ff4060"/>
<circle cx="556.4" cy="412.5" r="1.6" fill="#ff4060"/>
<path d="M361 147h5v5h-5zM362 148h3v3h-3zM390 256h5v5h-5zM391 257h3v3h-3zM554 410h5v5h-5zM555 411h3v3h-3zM524 437h5v5h-5zM525 438h3v3h-3zM538 442h5v5h-5zM539 443h3v3h-3zM551 446h5v5h-5zM552 447h3v3h-3zM566 451h5v5h-5zM567 452h3v3h-3zM575 459h5v5h-5zM576 460h3v3h-3zM584 468h5v5h-5zM585 469h3v3h-3zM593 476h5v5h-5zM594 477h3v3h-3zM604 480h5v5h-5zM605 481h3v3h-3zM614 484h5v5h-5zM615 485h3v3h-3zM625 488h5v5h-5zM626 489h3v3h-3zM632 496h5v5h-5zM633 497h3v3h-3zM640 503h5v5h-5zM641 504h3v3h-3zM648 510h5v5h-5zM649 511h3v3h-3z" fill="#ff00ff" fill-rule="evenodd" shape-rendering="crispEdges"/>
<rect x="627" y="490" width="1" height="1" fill="#fff"/>
<rect x="634" y="498" width="1" height="1" fill="#fff"/>
<rect x="642" y="505" width="1" height="1" fill="#fff"/>
<rect x="650" y="512" width="1" height="1" fill="#fff"/>
<text x="30.8" y="20.0" font-size="12.0" fill="#000" textLength="144.8" lengthAdjust="spacingAndGlyphs" stroke="#000" stroke-width="0.15">Geometric Data - Beaver Cr.</text>
<text x="8.7" y="44.5" font-size="11.5" fill="#000" textLength="17.5" lengthAdjust="spacingAndGlyphs" stroke="#000" stroke-width="0.15">File</text>
<rect x="8.7" y="46" width="6" height="1" fill="#000"/>
<text x="40.6" y="44.5" font-size="11.5" fill="#000" textLength="19.1" lengthAdjust="spacingAndGlyphs" stroke="#000" stroke-width="0.15">Edit</text>
<text x="74.8" y="44.5" font-size="11.5" fill="#000" textLength="41.0" lengthAdjust="spacingAndGlyphs" stroke="#000" stroke-width="0.15">Options</text>
<rect x="74.8" y="46" width="9" height="1" fill="#000"/>
<text x="130.4" y="44.5" font-size="11.5" fill="#000" textLength="24.6" lengthAdjust="spacingAndGlyphs" stroke="#000" stroke-width="0.15">View</text>
<rect x="130.4" y="46" width="7.5" height="1" fill="#000"/>
<text x="169.6" y="44.5" font-size="11.5" fill="#000" textLength="32.3" lengthAdjust="spacingAndGlyphs" stroke="#000" stroke-width="0.15">Tables</text>
<rect x="169.6" y="46" width="6.5" height="1" fill="#000"/>
<text x="216.5" y="44.5" font-size="11.5" fill="#000" textLength="27.6" lengthAdjust="spacingAndGlyphs" stroke="#000" stroke-width="0.15">Tools</text>
<rect x="216.5" y="46" width="6.5" height="1" fill="#000"/>
<text x="258.4" y="44.5" font-size="11.5" fill="#000" textLength="47.6" lengthAdjust="spacingAndGlyphs" stroke="#000" stroke-width="0.15">GIS Tools</text>
<rect x="258.4" y="46" width="8.5" height="1" fill="#000"/>
<text x="320.1" y="44.5" font-size="11.5" fill="#000" textLength="24.3" lengthAdjust="spacingAndGlyphs" stroke="#000" stroke-width="0.15">Help</text>
<rect x="320.1" y="46" width="8" height="1" fill="#000"/>
<path d="M10 9.1 L15.7 16.7 M21.7 9.1 L15.7 16.7 L23.8 22.4" stroke="#333" stroke-width="1" fill="none"/><rect x="14.7" y="15.7" width="2" height="2" fill="#ff0000"/>
<path d="M757 15.5 H767" stroke="#000" stroke-width="1"/><rect x="802.5" y="10.5" width="9" height="9" fill="none" stroke="#000" stroke-width="1"/><path d="M848 10 L858 20 M858 10 L848 20" stroke="#000" stroke-width="1.1"/>
<text x="23.0" y="63.0" font-size="11.0" fill="#000040" textLength="24.0" lengthAdjust="spacingAndGlyphs" stroke="#000040" stroke-width="0.25">Tools</text>
<text x="2.6" y="92.5" font-size="11.0" fill="#000040" textLength="32.4" lengthAdjust="spacingAndGlyphs" stroke="#000040" stroke-width="0.25">Editors</text>
<path d="M8 51.5 L49.5 91.5" stroke="#000" stroke-width="1" shape-rendering="crispEdges"/>
<text x="604.9" y="62.0" font-size="11.0" fill="#000040" textLength="58.8" lengthAdjust="spacingAndGlyphs" stroke="#000040" stroke-width="0.25">Description :</text>
<text x="737.6" y="62.0" font-size="11.0" fill="#000040" textLength="130.0" lengthAdjust="spacingAndGlyphs" stroke="#000040" stroke-width="0.25">Plot WS extents for Profile:</text>
<text x="742.0" y="82.0" font-size="11.0" fill="#000040" textLength="31.2" lengthAdjust="spacingAndGlyphs" stroke="#000040" stroke-width="0.2">(none)</text>
<text x="793.2" y="643.5" font-size="10.67" fill="#000" textLength="70.8" lengthAdjust="spacingAndGlyphs">0.9243, 0.8871</text>
<path d="M866.5 102 l3 -3 l3 3z M866.9 606 h5 l-2.5 3z M58 620 l-3.5 2.7 l3.5 2.7z M853 620 l3.5 2.7 l-3.5 2.7z" fill="#808080"/>
<path d="M860 76.5 h8 l-4 4z" fill="#000"/>
<rect x="696" y="69" width="16" height="17" fill="#f0f0f0"/><path d="M701 75.5 l2.5 -2.5 l2.5 2.5 M701 80.5 l2.5 2.5 l2.5 -2.5" stroke="#c4c4c4" stroke-width="1.2" fill="none"/>
<path d="M720.2 82.2 h1.5 M723.6 82.2 h1.5 M727.2 82.2 h1.5" stroke="#500040" stroke-width="1.5"/>
</svg>
<div class="abs" id="frame"></div>
</body></html>
